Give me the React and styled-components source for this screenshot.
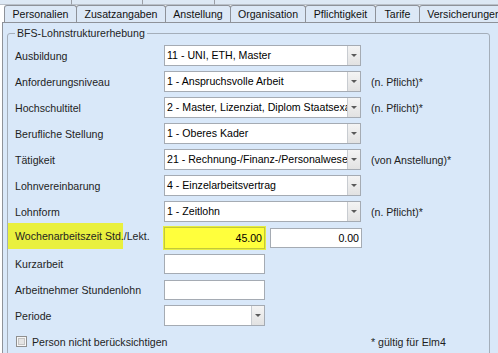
import styled, { createGlobalStyle } from 'styled-components';

const GlobalStyle = createGlobalStyle`
  html, body {
    margin: 0;
    padding: 0;
    background: #fff;
    overflow: hidden;
  }
  body {
    font-family: "Liberation Sans", Arial, sans-serif;
    font-size: 10.6px;
    color: #1e1e1e;
  }
`;

const Window = styled.div`
  width: 498px;
  height: 353px;
  overflow: hidden;
  display: flex;
  flex-direction: column;
  background: #fff;
`;

const BackRow = styled.div`
  display: flex;
  height: 5px;
  flex: none;
`;

const BackTab = styled.div`
  box-sizing: border-box;
  width: ${({ $w }) => ($w ? `${$w}px` : 'auto')};
  flex: ${({ $w }) => ($w ? 'none' : '1')};
  background: #dde8f4;
  border-right: ${({ $w }) => ($w ? '1px solid #9a9ea6' : 'none')};
  border-bottom: 1px solid #b9c0c9;
`;

const TabRow = styled.div`
  display: flex;
  height: 17px;
  padding-left: 4px;
  flex: none;
`;

const Tab = styled.div`
  box-sizing: border-box;
  width: ${({ $w }) => $w}px;
  flex: none;
  height: 17px;
  margin-right: -1px;
  border: 1px solid #8e9299;
  border-bottom: none;
  border-radius: 3px 3px 0 0;
  background: #dce8f6;
  display: flex;
  align-items: center;
  justify-content: center;
  white-space: nowrap;
  overflow: hidden;
  color: #111;
`;

const Panel = styled.div`
  flex: 1;
  margin-left: 2px;
  border-top: 1px solid #8e9299;
  border-left: 1px solid #8e9299;
  background: #d9e8f9;
  padding: 4px 0 0 4px;
`;

const Group = styled.fieldset`
  margin: 0;
  width: 483px;
  min-width: 0;
  box-sizing: border-box;
  border: 1px solid #a4aeba;
  border-radius: 3px;
  padding: 0 0 30px 7px;
`;

const Legend = styled.legend`
  padding: 0 2px;
  line-height: 13px;
  color: #1e1e1e;
`;

const Form = styled.div`
  display: flex;
  flex-direction: column;
  gap: 5px;
  padding-top: 5px;
`;

const Row = styled.div`
  display: flex;
  align-items: center;
  height: 21px;
`;

const Label = styled.div`
  width: 149px;
  flex: none;
  white-space: nowrap;
`;

const MarkedLabel = styled(Label)`
  align-self: flex-start;
  height: 26px;
  margin: -4px 0 0 -7px;
  padding-left: 7px;
  display: flex;
  align-items: center;
  background-image: linear-gradient(#e9f03e, #e9f03e);
  background-size: 115px 100%;
  background-repeat: no-repeat;
`;

const Combo = styled.div`
  box-sizing: border-box;
  width: ${({ $w }) => $w}px;
  height: 21px;
  flex: none;
  display: flex;
  border: 1px solid #a5abb3;
  background: #fff;
`;

const ComboText = styled.div`
  flex: 1;
  overflow: hidden;
  white-space: nowrap;
  padding-left: 2px;
  line-height: 19px;
  color: #000;
`;

const ComboButton = styled.div`
  width: 12px;
  flex: none;
  border-left: 1px solid #c8ccd1;
  background: linear-gradient(#f4f4f4, #e2e2e2);
  display: flex;
  align-items: center;
  justify-content: center;

  &::after {
    content: "";
    border-left: 3px solid transparent;
    border-right: 3px solid transparent;
    border-top: 3px solid #5a5a5a;
  }
`;

const Input = styled.div`
  box-sizing: border-box;
  width: ${({ $w }) => $w}px;
  height: ${({ $marked }) => ($marked ? 22 : 20)}px;
  flex: none;
  border: 1px solid ${({ $marked }) => ($marked ? '#c3c83a' : '#a5abb3')};
  background: ${({ $marked }) => ($marked ? '#ffff3c' : '#fff')};
  box-shadow: ${({ $marked }) => ($marked ? '0 0 0 1px #e6ee40' : 'none')};
  text-align: right;
  padding-right: 2px;
  line-height: ${({ $marked }) => ($marked ? 20 : 18)}px;
  color: #000;
  margin-right: ${({ $gap }) => $gap || 0}px;
`;

const Note = styled.div`
  margin-left: 10px;
  white-space: nowrap;
`;

const CheckField = styled.label`
  width: 346px;
  flex: none;
  display: flex;
  align-items: center;
  gap: 5px;
  white-space: nowrap;
`;

const Box = styled.span`
  box-sizing: border-box;
  width: 11px;
  height: 11px;
  margin-left: 1px;
  border: 1px solid #8f8f8f;
  background: #e4e4e4;
  box-shadow: inset 0 0 0 1px #f6f6f6, inset 0 0 0 2px #c4c4c4;
`;

const backTabs = [72, 71, 72];

const tabs = [
  ['Personalien', 73],
  ['Zusatzangaben', 90],
  ['Anstellung', 66],
  ['Organisation', 76],
  ['Pflichtigkeit', 71],
  ['Tarife', 45],
  ['Versicherungen', 90],
];

const combos = [
  ['Ausbildung', '11 - UNI, ETH, Master', ''],
  ['Anforderungsniveau', '1 - Anspruchsvolle Arbeit', '(n. Pflicht)*'],
  ['Hochschultitel', '2 - Master, Lizenziat, Diplom Staatsexamen', '(n. Pflicht)*'],
  ['Berufliche Stellung', '1 - Oberes Kader', ''],
  ['Tätigkeit', '21 - Rechnung-/Finanz-/Personalwesen', '(von Anstellung)*'],
  ['Lohnvereinbarung', '4 - Einzelarbeitsvertrag', ''],
  ['Lohnform', '1 - Zeitlohn', '(n. Pflicht)*'],
];

export default function App() {
  return (
    <Window>
      <GlobalStyle />
      <BackRow>
        {backTabs.map((w, i) => (
          <BackTab key={i} $w={w} />
        ))}
        <BackTab />
      </BackRow>
      <TabRow>
        {tabs.map(([name, w]) => (
          <Tab key={name} $w={w}>{name}</Tab>
        ))}
      </TabRow>
      <Panel>
        <Group>
          <Legend>BFS-Lohnstrukturerhebung</Legend>
          <Form>
            {combos.map(([label, value, note]) => (
              <Row key={label}>
                <Label>{label}</Label>
                <Combo $w={197}>
                  <ComboText>{value}</ComboText>
                  <ComboButton />
                </Combo>
                {note && <Note>{note}</Note>}
              </Row>
            ))}
            <Row>
              <MarkedLabel>Wochenarbeitszeit Std./Lekt.</MarkedLabel>
              <Input $w={101} $marked $gap={5}>45.00</Input>
              <Input $w={92}>0.00</Input>
            </Row>
            <Row>
              <Label>Kurzarbeit</Label>
              <Input $w={101} />
            </Row>
            <Row>
              <Label>Arbeitnehmer Stundenlohn</Label>
              <Input $w={101} />
            </Row>
            <Row>
              <Label>Periode</Label>
              <Combo $w={101}>
                <ComboText />
                <ComboButton />
              </Combo>
            </Row>
            <Row>
              <CheckField>
                <Box />
                Person nicht berücksichtigen
              </CheckField>
              <Note>* gültig für Elm4</Note>
            </Row>
          </Form>
        </Group>
      </Panel>
    </Window>
  );
}
